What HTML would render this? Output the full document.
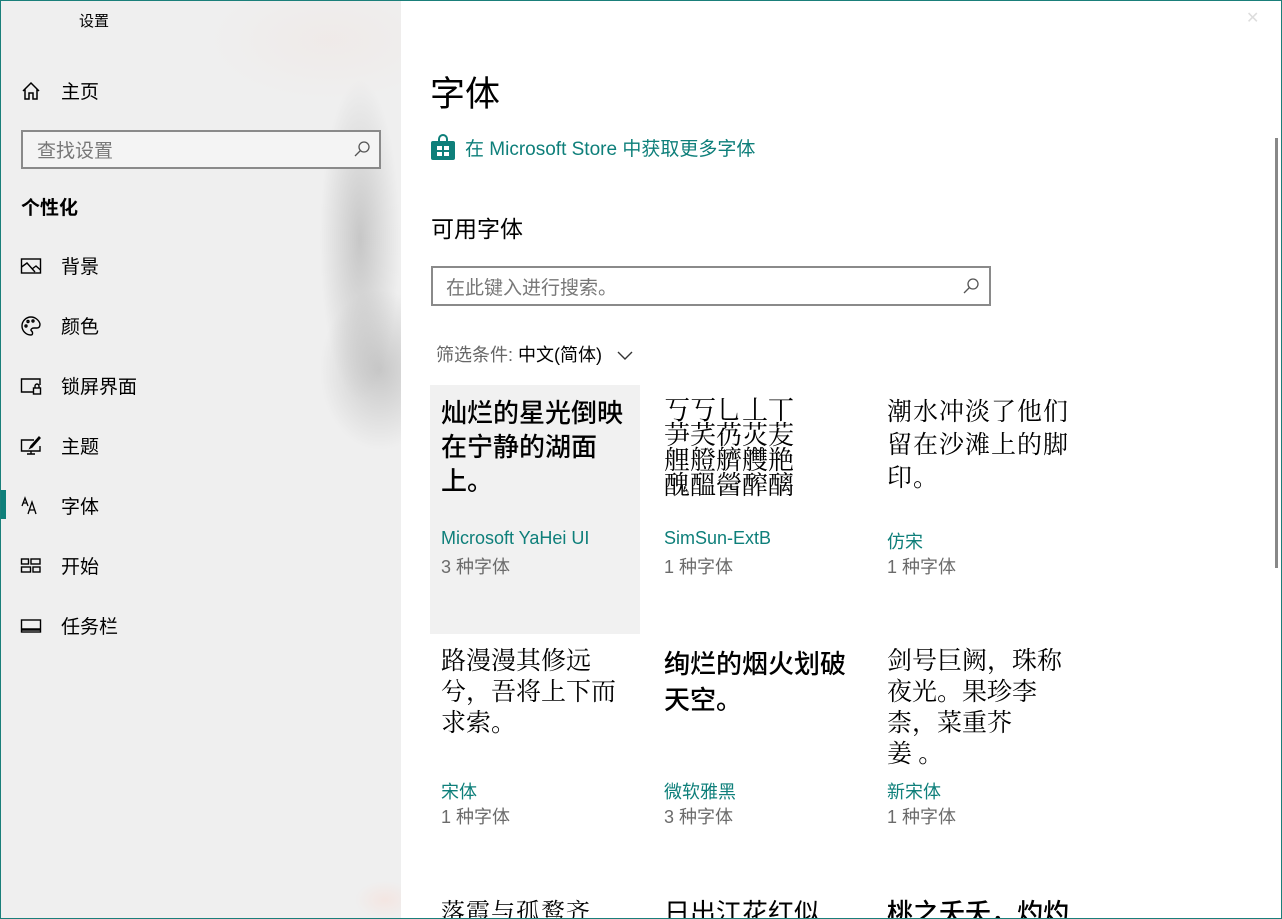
<!DOCTYPE html>
<html><head><meta charset="utf-8"><style>
*{margin:0;padding:0;box-sizing:border-box}
html,body{width:1282px;height:919px;overflow:hidden}
body{font-family:"Liberation Sans","Noto Sans CJK SC",sans-serif;background:#fff;position:relative;color:#000}
.frame{position:absolute;inset:0;border:1px solid #1a7f7a;z-index:10;pointer-events:none}
.side{position:absolute;left:0;top:0;width:401px;height:919px;background:
radial-gradient(ellipse 40px 160px at 360px 240px,rgba(150,150,150,.45),transparent),
radial-gradient(ellipse 60px 80px at 380px 370px,rgba(140,140,140,.4),transparent),
radial-gradient(ellipse 120px 60px at 330px 40px,rgba(240,225,220,.35),transparent),
radial-gradient(ellipse 30px 19px at 385px 900px,rgba(250,215,205,.4),transparent),
#efefef}
.abs{position:absolute;white-space:nowrap}
.nav{position:absolute;left:20px;font-size:19px;display:flex;align-items:center}
.nav svg{width:22px;height:22px;margin-right:19px}
.card{position:absolute;width:210px;height:249px;padding:11px;overflow:hidden}
.prev{font-size:26px;line-height:34px;height:125px;white-space:normal}
.nm{position:absolute;left:11px;top:143px;font-size:18px;color:#0e7f7a}
.ct{position:absolute;left:11px;top:168px;font-size:18px;color:#6b6b6b}
.serif{font-family:"Liberation Serif","Noto Serif CJK SC",serif}
.last{height:34px}
.last .prev{height:auto}
</style></head><body>
<div class="frame"></div>
<div class="side">
 <div class="abs" style="left:79px;top:10px;font-size:15px">设置</div>
 <div class="nav" style="top:77px"><svg viewBox="0 0 22 22" fill="none" stroke="#000" stroke-width="1.5"><path d="M3 11 L11 3 L19 11 M5 9 V19 H9 V13 H13 V19 H17 V9"/></svg>主页</div>
 <div class="abs" style="left:21px;top:130px;width:360px;height:39px;border:2px solid #8a8a8a;background:#f4f4f4"></div>
 <div class="abs" style="left:37px;top:136px;font-size:19px;color:#777">查找设置</div>
 <svg class="abs" style="left:353px;top:140px" width="18" height="18" viewBox="0 0 18 18" fill="none" stroke="#555" stroke-width="1.3"><circle cx="11" cy="7" r="5"/><path d="M7.5 10.5 L2 16"/></svg>
 <div class="abs" style="left:21px;top:193px;font-size:19px;font-weight:bold">个性化</div>
 <div class="nav" style="top:252px"><svg viewBox="0 0 22 22" fill="none" stroke="#000" stroke-width="1.4"><rect x="1.5" y="4" width="19" height="14"/><path d="M1.5 12 L7 8 L15 17 M12 14 L16 11 L20.5 15"/></svg>背景</div>
 <div class="nav" style="top:312px"><svg viewBox="0 0 22 22" fill="none" stroke="#000" stroke-width="1.4"><path d="M11 2 A9 9 0 1 0 11 20 C13 20 13 17 11.5 16 C10 14.5 12 13 14 13 H17 C20 13 20 10 20 9 C19 5 15 2 11 2Z"/><circle cx="6" cy="11" r="1"/><circle cx="8" cy="6.5" r="1"/><circle cx="13" cy="6" r="1"/></svg>颜色</div>
 <div class="nav" style="top:372px"><svg viewBox="0 0 22 22" fill="none" stroke="#000" stroke-width="1.4"><path d="M13 17 H1.5 V4 H20 V10"/><rect x="13.5" y="13" width="7" height="6"/><path d="M15 13 V11 A2 2 0 0 1 19 11 V13"/></svg>锁屏界面</div>
 <div class="nav" style="top:432px"><svg viewBox="0 0 22 22" fill="none" stroke="#000" stroke-width="1.4"><path d="M14 5 H1.5 V16 H20 V11 M11 16 V19 M7 19 H15"/><path d="M20 3 L12 12 L10 13 L11 11 L19 2Z"/></svg>主题</div>
 <div class="abs" style="left:0;top:490px;width:6px;height:29px;background:#0e7f7a"></div>
 <div class="nav" style="top:492px"><svg viewBox="0 0 22 22" fill="none" stroke="#000" stroke-width="1.3"><path d="M2 11 L5 3 L8 11 M3 8 H7 M8 19 L12 7 L16 19 M9.5 15 H14.5"/></svg>字体</div>
 <div class="nav" style="top:552px"><svg viewBox="0 0 22 22" fill="none" stroke="#000" stroke-width="1.4"><rect x="1.5" y="4" width="7" height="5"/><rect x="11" y="4" width="9" height="5"/><rect x="1.5" y="12" width="9" height="5"/><rect x="13" y="12" width="7" height="5"/></svg>开始</div>
 <div class="nav" style="top:612px"><svg viewBox="0 0 22 22" fill="none" stroke="#000" stroke-width="1.4"><rect x="1.5" y="5" width="19" height="12"/><path d="M1.5 14.5 H20.5" stroke-width="2.5"/></svg>任务栏</div>
</div>
<div class="abs" style="left:1246px;top:8px;font-size:16px;color:#ddd">✕</div>
<div class="abs" style="left:1275px;top:138px;width:3px;height:430px;background:#888"></div>
<div class="abs" style="left:430px;top:66px;font-size:35px">字体</div>
<svg class="abs" style="left:431px;top:134px" width="24" height="26" viewBox="0 0 24 26"><path d="M8 7 V5 A4 4 0 0 1 16 5 V7" fill="none" stroke="#0e7f7a" stroke-width="2"/><rect x="0" y="7" width="24" height="19" rx="2" fill="#0e7f7a"/><rect x="6" y="12" width="5" height="4" fill="#fff"/><rect x="13" y="12" width="5" height="4" fill="#fff"/><rect x="6" y="18" width="5" height="4" fill="#fff"/><rect x="13" y="18" width="5" height="4" fill="#fff"/></svg>
<div class="abs" style="left:465px;top:134px;font-size:19px;color:#0e7f7a">在 Microsoft Store 中获取更多字体</div>
<div class="abs" style="left:431px;top:210px;font-size:23px">可用字体</div>
<div class="abs" style="left:431px;top:266px;width:560px;height:40px;border:2px solid #8a8a8a"></div>
<div class="abs" style="left:446px;top:273px;font-size:19px;color:#777">在此键入进行搜索。</div>
<svg class="abs" style="left:962px;top:277px" width="18" height="18" viewBox="0 0 18 18" fill="none" stroke="#555" stroke-width="1.3"><circle cx="11" cy="7" r="5"/><path d="M7.5 10.5 L2 16"/></svg>
<div class="abs" style="left:436px;top:341px;font-size:18px"><span style="color:#666">筛选条件:</span> 中文(简体)</div>
<svg class="abs" style="left:617px;top:349px" width="16" height="12" viewBox="0 0 16 12" fill="none" stroke="#333" stroke-width="1.4"><path d="M1 3 L8 10 L15 3"/></svg>

<div class="card" style="left:430px;top:385px;background:#f1f1f1"><div class="prev" style="font-weight:500">灿烂的星光倒映<br>在宁静的湖面<br>上。</div><div class="nm">Microsoft YaHei UI</div><div class="ct">3 种字体</div></div>
<div class="card" style="left:653px;top:385px"><div class="prev serif" style="font-size:26px;line-height:25px;padding-top:2px">丂丂乚丄丅<br>芛芺芿苂苃<br>艃艠艩艭艵<br>醜醞醟醡醨</div><div class="nm">SimSun-ExtB</div><div class="ct">1 种字体</div></div>
<div class="card" style="left:876px;top:385px"><div class="prev serif" style="letter-spacing:1px;font-size:25px;line-height:33px">潮水冲淡了他们<br>留在沙滩上的脚<br>印。</div><div class="nm">仿宋</div><div class="ct">1 种字体</div></div>

<div class="card" style="left:430px;top:635px"><div class="prev serif" style="font-size:25px;line-height:31px">路漫漫其修远<br>兮，吾将上下而<br>求索。</div><div class="nm">宋体</div><div class="ct">1 种字体</div></div>
<div class="card" style="left:653px;top:635px"><div class="prev" style="font-weight:500;line-height:36px">绚烂的烟火划破<br>天空。</div><div class="nm">微软雅黑</div><div class="ct">3 种字体</div></div>
<div class="card" style="left:876px;top:635px"><div class="prev serif" style="font-size:25px;line-height:31px">剑号巨阙，珠称<br>夜光。果珍李<br>柰，菜重芥<br>姜 。</div><div class="nm">新宋体</div><div class="ct">1 种字体</div></div>

<div class="card last" style="left:430px;top:885px"><div class="prev serif" style="letter-spacing:1px;font-size:24px">落霞与孤鹜齐</div></div>
<div class="card last" style="left:653px;top:885px"><div class="prev">日出江花红似</div></div>
<div class="card last" style="left:876px;top:885px"><div class="prev" style="font-weight:500">桃之夭夭，灼灼</div></div>
</body></html>
